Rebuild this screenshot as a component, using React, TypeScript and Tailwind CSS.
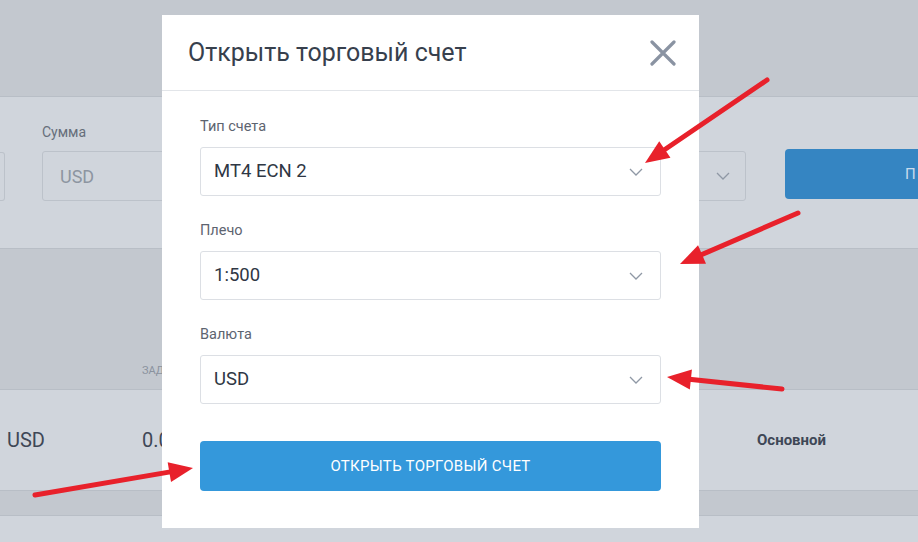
import React from "react";

const arrows = [
  { x1: 767, y1: 80, x2: 645, y2: 163 },
  { x1: 798, y1: 213, x2: 680, y2: 264 },
  { x1: 782, y1: 389, x2: 667, y2: 377 },
  { x1: 35, y1: 495, x2: 193, y2: 468 },
];

function Arrow({ x1, y1, x2, y2 }: { x1: number; y1: number; x2: number; y2: number }) {
  const dx = x2 - x1;
  const dy = y2 - y1;
  const len = Math.hypot(dx, dy);
  const ux = dx / len;
  const uy = dy / len;
  const head = 24;
  const half = 10;
  const bx = x2 - ux * head;
  const by = y2 - uy * head;
  const pts = `${x2},${y2} ${bx - uy * half},${by + ux * half} ${bx + uy * half},${by - ux * half}`;
  return (
    <g>
      <line x1={x1} y1={y1} x2={bx + ux * 4} y2={by + uy * 4} stroke="#e8212b" strokeWidth={5} strokeLinecap="round" />
      <polygon points={pts} fill="#e8212b" />
    </g>
  );
}

function Chevron() {
  return (
    <svg width="14" height="8" viewBox="0 0 14 8">
      <path d="M1 1 L7 7 L13 1" fill="none" stroke="#8f98a5" strokeWidth="1.3" />
    </svg>
  );
}

function Select({ label, value }: { label: string; value: string }) {
  return (
    <div className="flex flex-col">
      <span className="text-[14.5px] leading-[20px] text-[#5d6470]">{label}</span>
      <div className="mt-[10px] flex h-[49px] items-center justify-between rounded-[3px] border border-[#dcdfe4] pl-[13px] pr-[17px]">
        <span className="text-[18.5px] text-[#2f3744]">{value}</span>
        <Chevron />
      </div>
    </div>
  );
}

export default function App() {
  return (
    <div className="relative h-[542px] w-[918px] overflow-hidden bg-[#d0d5dc] font-['Roboto',sans-serif]">
      {/* dimmed page behind */}
      <div className="h-[97px] border-b border-[#b8bec6] bg-[#c3c8cf]" />
      <div className="flex h-[151px] items-start bg-[#d0d5dc] pt-[24px]">
        <div className="mt-[31px] h-[49px] w-[5px] shrink-0 rounded-r-[3px] border border-l-0 border-[#bcc2ca]" />
        <div className="ml-[37px] flex shrink-0 flex-col">
          <span className="text-[14px] leading-[22px] text-[#666e7a]">Сумма</span>
          <div className="mt-[8px] flex h-[50px] w-[160px] items-center rounded-[3px] border border-[#bcc2ca] pl-[17px] text-[18px] text-[#8d95a1]">
            USD
          </div>
        </div>
        <div className="ml-auto mt-[30px] flex h-[50px] w-[100px] shrink-0 items-center justify-end rounded-[3px] border border-[#bcc2ca] pr-[15px]">
          <Chevron />
        </div>
        <div className="ml-[39px] mt-[28px] flex h-[50px] w-[133px] shrink-0 items-center rounded-l-[4px] bg-[#3585c2] pl-[120px] text-[15px] text-[#c9dced]">
          П
        </div>
      </div>
      <div className="flex h-[141px] items-end border-t border-[#b8bec6] bg-[#c3c8cf] pb-[10px] pl-[142px]">
        <span className="w-[20px] overflow-hidden whitespace-nowrap text-[11px] uppercase text-[#8a929e]">Задолженность</span>
      </div>
      <div className="flex h-[101px] items-center border-t border-[#b8bec6] bg-[#d0d5dc]">
        <span className="ml-[7px] w-[135px] text-[20px] text-[#3e4756]">USD</span>
        <span className="w-[20px] overflow-hidden whitespace-nowrap text-[20px] text-[#3e4756]">0.00</span>
        <span className="ml-[595px] text-[15px] font-bold text-[#3e4756]">Основной</span>
      </div>
      <div className="h-[26px] border-y border-[#b8bec6] bg-[#c3c8cf]" />

      {/* modal */}
      <div className="absolute left-[162px] top-[15px] flex h-[513px] w-[537px] flex-col bg-white">
        <div className="flex h-[76px] items-center justify-between border-b border-[#e2e5e9] pl-[26px] pr-[23px]">
          <span className="text-[25px] text-[#37404d]">Открыть торговый счет</span>
          <svg width="26" height="26" viewBox="0 0 26 26">
            <path d="M2 2 L24 24 M24 2 L2 24" stroke="#8a93a2" strokeWidth="3.2" strokeLinecap="round" />
          </svg>
        </div>
        <div className="flex flex-col gap-[25px] px-[38px] pt-[26px]">
          <Select label="Тип счета" value="MT4 ECN 2" />
          <Select label="Плечо" value="1:500" />
          <Select label="Валюта" value="USD" />
        </div>
        <div className="mx-[38px] mt-[37px] flex h-[50px] items-center justify-center rounded-[4px] bg-[#3498db] text-[15px] tracking-[0.3px] text-white">
          ОТКРЫТЬ ТОРГОВЫЙ СЧЕТ
        </div>
      </div>

      <svg className="absolute left-0 top-0" width="918" height="542">
        {arrows.map((a, i) => (
          <Arrow key={i} {...a} />
        ))}
      </svg>
    </div>
  );
}
